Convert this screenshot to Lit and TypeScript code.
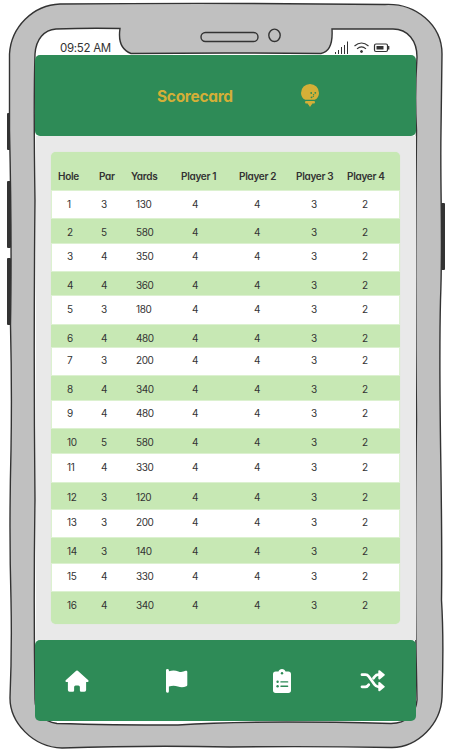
import { LitElement, html, svg, css } from "lit";
import { customElement } from "lit/decorators.js";

type Row = { cells: string[]; height: number; shift: number };

const row = (hole: number, par: number, yards: number, height: number, shift: number): Row => ({
  cells: [hole, par, yards, 4, 4, 3, 2].map(String),
  height,
  shift,
});

const HEADINGS = ["Hole", "Par", "Yards", "Player 1", "Player 2", "Player 3", "Player 4"];

const ROWS: Row[] = [
  row(1, 3, 130, 29, 5), row(2, 5, 580, 24, 4), row(3, 4, 350, 29, 4), row(4, 4, 360, 23, 4),
  row(5, 3, 180, 30, 5), row(6, 4, 480, 22, 4), row(7, 3, 200, 29, 4), row(8, 4, 340, 24, 4),
  row(9, 4, 480, 29, 4), row(10, 5, 580, 24, 4), row(11, 4, 330, 30, 5), row(12, 3, 120, 26, 5),
  row(13, 3, 200, 29, 4), row(14, 3, 140, 25, 4), row(15, 4, 330, 29, 4), row(16, 4, 340, 32, 4),
];

const frame = svg`
  <g fill="#333">
    <rect x="7" y="113" width="4" height="37" rx="1"/>
    <rect x="7" y="181" width="4" height="67" rx="1"/>
    <rect x="7" y="258" width="4" height="67" rx="1"/>
    <rect x="441" y="203" width="4" height="67" rx="1"/>
  </g>
  <path fill="#c0c0c0" stroke="#333" stroke-width="1.4" d="M60 4 Q220 2.5 385 4.5 C416 3 442 25 442 54 L441 130 C440 190 443 235 440.500 300 C438 400 443 500 441.500 600 C444 640 443 665 442 697 C441 724 418 747 392 747.500 Q310 746 230 747 Q150 745 62 748 C32 747 10 722 10 698 Q12 650 11 600 Q9 530 11 450 Q12 390 10.500 325 Q12 240 9.500 130 L9.500 54 C11 27 33 5 60 4Z"/>
  <path fill="#fff" stroke="#333" stroke-width="1.4" d="M56 29 Q88 27.800 120 28.500 C118 42 122 50 131 53.500 Q225 52.500 321 53.500 C329 52 333 45 332 29 L393 29 C408 29 417 41 417 57 Q414.500 95 416.500 130 Q415 280 416.500 420 Q415 550 416 650 L417 700 C416 715 406 723 391 723.500 Q250 720 178 725 Q110 725 57 723.500 C42 721 35 713 35 699 Q33.500 600 35 500 Q33.500 350 35 200 Q33.500 100 35 54 C36 39 44 30 56 29Z"/>
  <rect x="201" y="32.500" width="57" height="9" rx="4.500" fill="none" stroke="#333" stroke-width="1.400"/>
  <ellipse cx="274.500" cy="35.300" rx="5.700" ry="6.200" fill="none" stroke="#333" stroke-width="1.400"/>
`;

@customElement("app-root")
export class AppRoot extends LitElement {
  static styles = css`
    :host {
      display: block;
      position: relative;
      width: 453px;
      height: 750px;
      overflow: hidden;
      background: #fff;
      color: #333;
      font-family: Inter, "Liberation Sans", sans-serif;
      font-feature-settings: "cv11";
    }
    .frame { position: absolute; inset: 0; display: block; }
    .screen {
      position: relative;
      display: flex;
      flex-direction: column;
      box-sizing: border-box;
      width: 381px;
      height: 721px;
      margin-left: 35px;
      padding-top: 40px;
    }
    .status {
      display: flex;
      justify-content: space-between;
      flex: none;
      height: 15px;
      padding: 0 26px 0 25px;
      font-size: 11.5px;
      line-height: 17px;
      letter-spacing: -0.3px;
      white-space: nowrap;
    }
    .status svg { display: block; }
    .bar { flex: none; display: flex; height: 81px; border-radius: 5px; background: #2e8b57; }
    .top { align-items: center; color: #d4af37; padding-left: 122px; }
    .title { width: 143px; padding-top: 2px; font-size: 15.5px; font-weight: 700; line-height: 24px; letter-spacing: -0.3px; }
    .bulb { display: block; margin-top: -1px; }
    .body { flex: 1; background: #e9e9e9; padding: 16px 16px 0 15px; margin-left: 1px; }
    .table {
      height: 472px;
      border-radius: 5px;
      background: #c7e8b4;
      overflow: hidden;
      box-shadow: 0 0 1px #c7e8b4;
    }
    .row {
      display: grid;
      grid-template-columns: 34px 35px 56px 62px 57px 51px 38px;
      box-sizing: border-box;
      padding-left: 16px;
      font-size: 10px;
      letter-spacing: -0.4px;
      white-space: nowrap;
    }
    .row:nth-child(even) { background: #fff; box-shadow: inset 0 0 0 1px #dcf1d0; }
    .head {
      grid-template-columns: 41px 32px 50px 58px 57px 51px 38px;
      height: 38px;
      padding: 15px 0 0 7px;
      font-weight: 600;
      letter-spacing: -0.3px;
    }
    .cell { height: 18px; line-height: 18px; }
    .nav { gap: 76px; padding: 28px 0 0 30px; box-sizing: border-box; }
    .nav svg { display: block; fill: #fff; flex: none; }
    .nav .clipboard { margin-left: 7px; margin-right: -8px; }
  `;

  render() {
    return html`
      <svg class="frame" width="453" height="750" viewBox="0 0 453 750">${frame}</svg>
      <div class="screen">
        <div class="status">
          <span>09:52 AM</span>
          <svg width="56" height="15" viewBox="0 0 56 15" fill="none" stroke="#333">
            <path d="M1.500 14V12M4.500 14V10M7.500 14V7M10.500 14V5M13.500 14V1.500"/>
            <path d="M20.500 6Q27.500 0 34.500 6M23 8.800Q27.500 5 32 8.800" stroke-width="1.100"/>
            <circle cx="27.500" cy="11.500" r="1" fill="#333"/>
            <rect x="40.500" y="4" width="13" height="7.500" rx="1.500" stroke-width="1.200"/>
            <path d="M54.700 6V9.500" stroke-width="1.300"/>
            <rect x="42.500" y="6" width="7" height="3.500" fill="#333" stroke="none"/>
          </svg>
        </div>
        <header class="bar top">
          <div class="title">Scorecard</div>
          <svg class="bulb" width="20" height="25" viewBox="0 0 20 25">
            <path fill="#d4af37" d="M5.200 16.800C2.500 15.500 1 12.800 1 9.900a9 9 0 0 1 18 0c0 2.900-1.500 5.600-4.200 6.900ZM6 18h8q1 0 1 1.300t-1.300 1.200H12.300q0 1-.8 1.300L10 24 8.500 21.800q-.8-.3-.8-1.300H6.300Q5 20.600 5 19.300T6 18Z"/>
            <g fill="#2e8b57"><circle cx="11.200" cy="10" r=".9"/><circle cx="15.300" cy="9.800" r=".9"/><circle cx="13.600" cy="11.700" r=".7"/><circle cx="11.500" cy="14.300" r=".9"/><circle cx="13.300" cy="13.400" r=".6"/></g>
          </svg>
        </header>
        <main class="body">
          <div class="table">
            <div class="row head">${HEADINGS.map((h) => html`<div class="cell">${h}</div>`)}</div>
            ${ROWS.map(
              (r) => html`<div class="row" style="height:${r.height}px;padding-top:${r.shift}px">
                ${r.cells.map((c) => html`<div class="cell">${c}</div>`)}
              </div>`
            )}
          </div>
        </main>
        <nav class="bar nav">
          <svg width="24" height="27" viewBox="0 0 25 27"><path d="M11.700 2.300q.8-.6 1.600 0L24 11.900c1.100 1.100.5 2.200-1 2.200h-1v8.200q0 1.800-1.800 1.800h-3.400q-1.300 0-1.300-1.300v-3.500q0-1.600-1.600-1.600h-2.800q-1.600 0-1.600 1.600v3.500q0 1.300-1.300 1.300H4.800Q3 24.100 3 22.300v-8.200H2c-1.500 0-2.100-1.100-1-2.200Z"/></svg>
          <svg width="24" height="27" viewBox="0 0 24 27"><path d="M1 2.300Q1 1 2.400 1t1.500 1.300v.9c3-.9 6.500-1 9.500.2 2.300.9 4.700.5 7.200-.6q1.700-.6 1.700 1.100v13q0 1-.9 1.400c-3 1.300-5.800 1.300-8.500.2-3-1.100-6-.9-9-.1v4.800q0 1.500-1.500 1.500T1 23.300Z"/></svg>
          <svg class="clipboard" width="20" height="27" viewBox="0 0 20 27"><path fill-rule="evenodd" d="M6.500 3.500C7 2 8.200 1 10 1s3 1 3.500 2.500h2.800Q19 3.600 19 6.200v16.100q0 2.700-2.700 2.700H3.700Q1 25 1 22.300V6.200Q1 3.500 3.700 3.500Z"/><g fill="#2e8b57"><circle cx="10" cy="5.300" r="1.200"/><circle cx="5.600" cy="13.800" r="1.200"/><circle cx="5.600" cy="18.300" r="1.200"/><rect x="8.300" y="13.200" width="8" height="1.300" rx=".6"/><rect x="8.300" y="17.600" width="8" height="1.300" rx=".6"/></g></svg>
          <svg width="25" height="27" viewBox="0 0 25 27"><g fill="none" stroke="#fff" stroke-width="2.800" stroke-linecap="round"><path d="M2 6.700H5Q7.300 6.500 8.800 8.500L14.500 16.500Q16.300 19 19 18.800H20"/><path d="M2 18.800H5Q7.300 19 8.700 16.700M13.500 10.200L14.800 8.500Q16.300 6.500 19 6.700H20"/></g><path d="M18.300 3.300q0-1.700 1.700-.8l4.500 3.800q.7.500 0 1.100L20 11.200q-1.700.8-1.700-.9ZM18.300 15q0-1.700 1.700-.8l4.500 4q.7.500 0 1.100L20 23.100q-1.700.8-1.700-.9Z"/></svg>
        </nav>
      </div>`;
  }
}
